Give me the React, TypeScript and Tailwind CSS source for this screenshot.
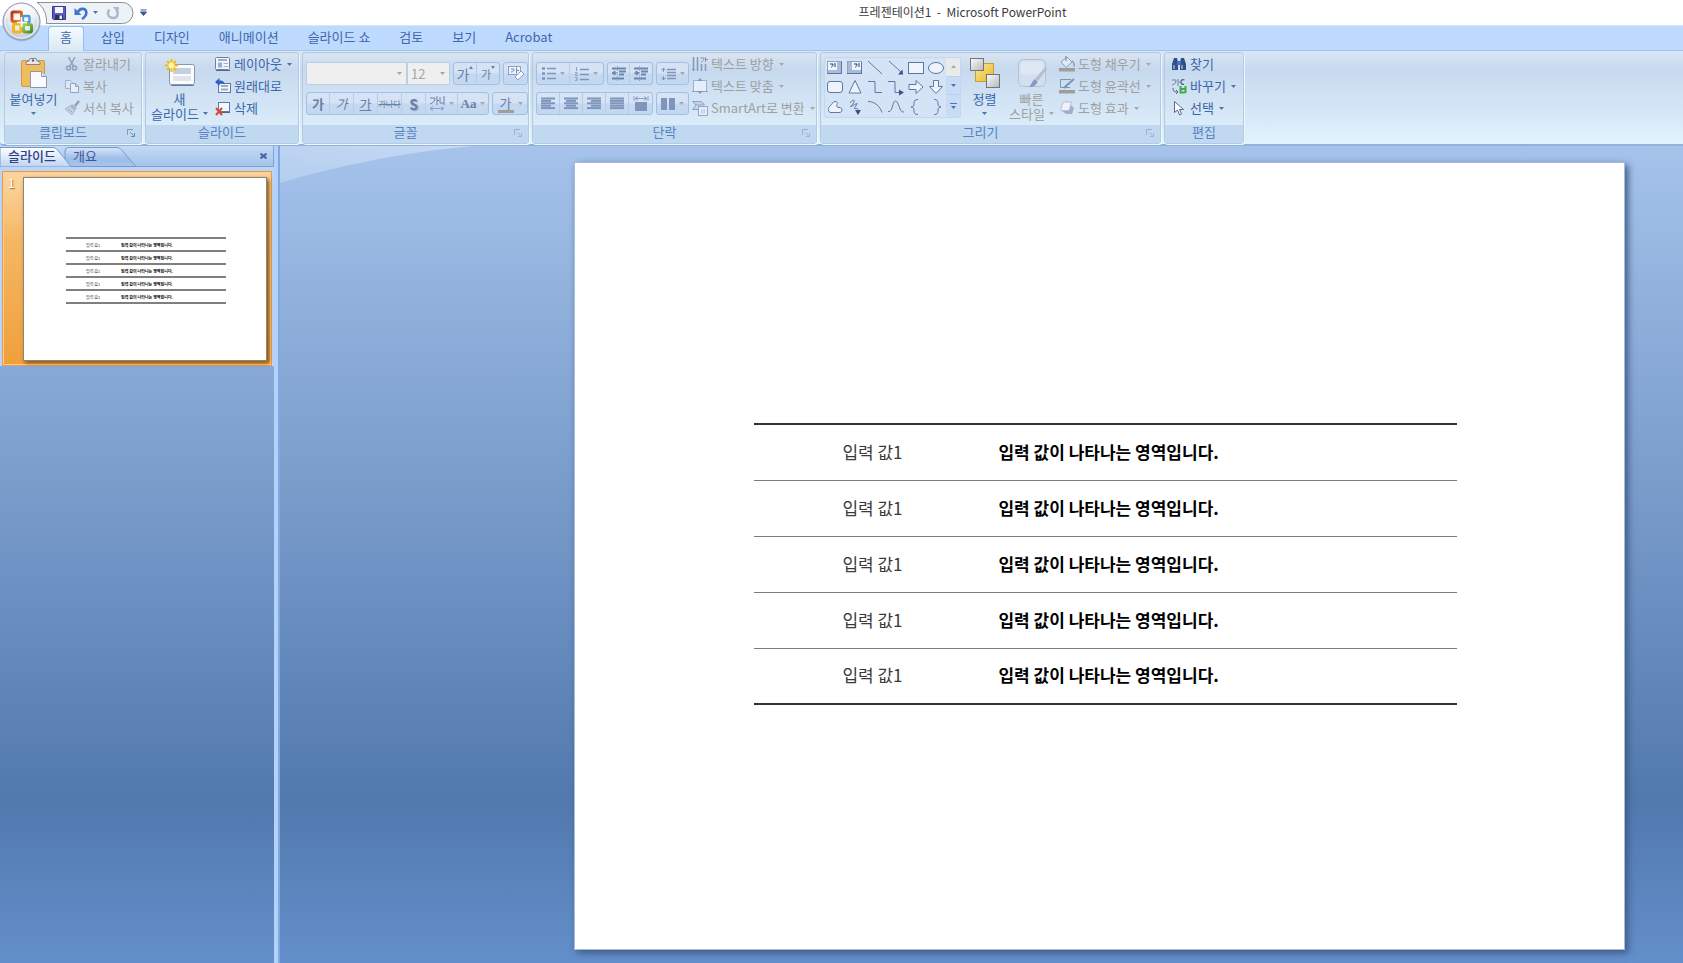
import React from "react";

type Kids = { children?: React.ReactNode };

const Svg = ({ w, h, children }: Kids & { w: number; h: number }) => (
  <svg width={w} height={h} viewBox={`0 0 ${w} ${h}`} fill="none" className="shrink-0" aria-hidden="true">
    {children}
  </svg>
);

const Caret = ({ off = false }: { off?: boolean }) => (
  <Svg w={5} h={3}>
    <path d="M0 0h5L2.500 3z" fill={off ? "#a9a7a5" : "#4a74b4"} />
  </Svg>
);

/* ---------- quick access ---------- */

const OfficeOrb = () => (
  <svg width="42" height="42" viewBox="0 0 42 42" fill="none" aria-hidden="true">
    <defs>
      <radialGradient id="orb" cx="50%" cy="40%" r="60%">
        <stop offset="0" stopColor="#ffffff" />
        <stop offset="0.6" stopColor="#e3e9f1" />
        <stop offset="1" stopColor="#b4bfce" />
      </radialGradient>
      <linearGradient id="shine" x1="0" y1="0" x2="0" y2="1">
        <stop offset="0" stopColor="#fff" stopOpacity="0.9" />
        <stop offset="1" stopColor="#fff" stopOpacity="0.2" />
      </linearGradient>
      <linearGradient id="logoRed" x1="0" y1="0" x2="1" y2="1">
        <stop offset="0" stopColor="#c1301a" />
        <stop offset="1" stopColor="#f08a28" />
      </linearGradient>
      <linearGradient id="logoGreen" x1="0" y1="0" x2="1" y2="1">
        <stop offset="0" stopColor="#a6cf5a" />
        <stop offset="1" stopColor="#3f8f2c" />
      </linearGradient>
    </defs>
    <circle cx="21.500" cy="22.500" r="19" fill="#7388a8" opacity="0.35" />
    <circle cx="21.500" cy="21.500" r="18.500" fill="url(#orb)" stroke="#8b9bb3" />
    <circle cx="21.500" cy="21.500" r="16.500" stroke="#fff" strokeOpacity="0.8" />
    <path d="M5 19C6 9 13 4 21 4s15 5 16 15c-9-3-23-3-32 0z" fill="url(#shine)" />
    <rect x="12" y="12" width="9.500" height="9.500" rx="1.500" stroke="url(#logoRed)" strokeWidth="3" />
    <rect x="23" y="16" width="6.500" height="6.500" rx="1" stroke="#4a9bd6" strokeWidth="2.400" />
    <rect x="13.500" y="24" width="7.500" height="8" rx="1.500" stroke="#f2b51d" strokeWidth="3" />
    <rect x="23.500" y="24.500" width="8" height="7.500" rx="1.500" stroke="url(#logoGreen)" strokeWidth="3" />
    <path d="M21.500 17v10M17 22.500h10" stroke="#fff" strokeWidth="1.600" />
  </svg>
);

const SaveIcon = () => (
  <Svg w={16} h={16}>
    <path d="M1.500 1.500h13v13h-12l-1-1z" fill="#5b5bc0" stroke="#36368f" />
    <rect x="4" y="2" width="8" height="6" fill="#f4f6fc" />
    <rect x="4" y="10" width="8" height="4.500" fill="#2c2c60" />
    <rect x="8.500" y="10.500" width="2.500" height="3.500" fill="#e9edf7" />
  </Svg>
);

const UndoIcon = () => (
  <Svg w={14} h={14}>
    <path d="M0.500 2v7h7z" fill="#4173c8" />
    <path d="M4 6c2-4 7-4 8-1s-1 6-4 8" stroke="#4173c8" strokeWidth="2.600" />
  </Svg>
);

const RedoIcon = () => (
  <Svg w={14} h={14}>
    <path d="M3.500 3.500C1 6 1.500 11.500 6.500 12S13 7.500 10.500 4" stroke="#a9b9cf" strokeWidth="2.400" />
    <path d="M7 1h6l-1 6z" fill="#a9b9cf" />
  </Svg>
);

/* ---------- large ribbon icons ---------- */

const PasteIcon = () => (
  <Svg w={28} h={32}>
    <rect x="1.500" y="3.500" width="23" height="26" rx="1.500" fill="#f0bd5c" stroke="#cf9c45" />
    <path d="M6 7.500V5l3-1 1-2.500h6L17 4l3 1v2.500z" fill="#e8e8e8" stroke="#84888e" />
    <circle cx="13" cy="3.500" r="1.200" fill="#666" />
    <path d="M10.500 14.500h11l5 5v11h-16z" fill="#f9fbfe" stroke="#8a98ad" />
    <path d="M21.500 14.500v5h5" fill="#dbe3ee" stroke="#8a98ad" />
  </Svg>
);

const NewSlideIcon = () => (
  <Svg w={32} h={30}>
    <rect x="5.500" y="6.500" width="25" height="20" rx="2" fill="#fbfcfe" stroke="#8497b4" />
    <path d="M7 27.500h23" stroke="#6b7b94" />
    <rect x="9" y="10" width="18" height="6" fill="#c6cfde" />
    <rect x="9" y="18" width="18" height="5" fill="#dfe4ed" />
    <path d="M7.500 1v13M1 7.500h13M3 3l9 9M12 3l-9 9" stroke="#f2bb12" strokeWidth="2" />
    <circle cx="7.500" cy="7.500" r="3" fill="#fff6a8" />
  </Svg>
);

const ArrangeIcon = () => (
  <Svg w={32} h={32}>
    <defs>
      <linearGradient id="boxg" x1="0" y1="0" x2="1" y2="1">
        <stop offset="0" stopColor="#fafafa" />
        <stop offset="1" stopColor="#b4b8be" />
      </linearGradient>
      <linearGradient id="boxy" x1="0" y1="0" x2="1" y2="1">
        <stop offset="0" stopColor="#ffe99a" />
        <stop offset="1" stopColor="#e6b626" />
      </linearGradient>
    </defs>
    <rect x="6.500" y="6.500" width="18" height="18" fill="url(#boxy)" stroke="#c9a02c" />
    <rect x="1.500" y="1.500" width="13" height="12" fill="url(#boxg)" stroke="#6f757d" />
    <rect x="17.500" y="17.500" width="13" height="13" fill="url(#boxg)" stroke="#6f757d" />
  </Svg>
);

const QuickStyleIcon = () => (
  <Svg w={32} h={32}>
    <rect x="2.500" y="2.500" width="27" height="27" rx="5" fill="#d3dfef" stroke="#b2c1d8" />
    <rect x="4.500" y="4.500" width="23" height="13" rx="4" fill="#dee7f4" />
    <path d="M31 12l-9 12-3-2 10-12z" fill="#b2c0d6" />
    <path d="M21.500 24.500c-1 4-5 6-9 5.500 3-1 3-6 6.500-8z" fill="#8299c4" />
  </Svg>
);

/* ---------- small ribbon icons ---------- */

const CutIcon = () => (
  <Svg w={16} h={16}>
    <path d="M4.500 1l5 9M11 1L6 10" stroke="#8d9fbd" strokeWidth="1.500" />
    <circle cx="4.500" cy="12" r="2" stroke="#8d9fbd" strokeWidth="1.500" />
    <circle cx="10.500" cy="12" r="2" stroke="#8d9fbd" strokeWidth="1.500" />
  </Svg>
);
const CopyIcon = () => (
  <Svg w={16} h={16}>
    <path d="M1.500 2.500h5l2 2v6h-7z" fill="#dde6f2" stroke="#a3b2ca" />
    <path d="M6.500 5.500h5l3 3v6h-8z" fill="#e8eef7" stroke="#93a4bf" />
    <path d="M11.500 5.500v3h3" stroke="#93a4bf" />
  </Svg>
);
const BrushIcon = () => (
  <Svg w={16} h={16}>
    <path d="M15 1l-4 5" stroke="#8d9fbd" strokeWidth="2.400" />
    <path d="M8 4l5 4-2 2-5-4z" fill="#a9b7cd" />
    <path d="M6 6l5 4-3 5-7-6z" fill="#c6d1e1" stroke="#9aabc6" strokeWidth="0.800" />
    <path d="M4 9l4 3" stroke="#9aabc6" />
  </Svg>
);
const LayoutIcon = () => (
  <Svg w={16} h={16}>
    <rect x="0.500" y="1.500" width="14" height="12" rx="1" fill="#f1f5fb" stroke="#6680aa" />
    <path d="M3 4h9" stroke="#8096ba" strokeWidth="1.500" />
    <rect x="3" y="6.500" width="4" height="5" fill="#9badc9" />
    <path d="M8.500 7.500H13M8.500 10.500H13" stroke="#9badc9" />
    <path d="M1 14.500h14" stroke="#52698f" />
  </Svg>
);
const ResetIcon = () => (
  <Svg w={16} h={16}>
    <rect x="3.500" y="5.500" width="12" height="9" fill="#f1f5fb" stroke="#5e7aa8" />
    <path d="M6 8h7" stroke="#8096ba" strokeWidth="1.500" />
    <path d="M6 11.500h7" stroke="#9badc9" strokeWidth="2" />
    <path d="M0 4l4.500-4v2.500c4 0 5 2 5 4C8 5 6.500 5 4.500 5.500V8z" fill="#2d62c4" />
  </Svg>
);
const DeleteIcon = () => (
  <Svg w={16} h={16}>
    <rect x="3.500" y="2.500" width="11" height="9" fill="#f4f7fc" stroke="#5e7aa8" />
    <path d="M4 12.500h11" stroke="#4b6693" />
    <path d="M1 8l6 7M7 8l-6 7" stroke="#e0452f" strokeWidth="2" />
  </Svg>
);
const TextDirIcon = () => (
  <Svg w={16} h={16}>
    <path d="M1.500 1v14M5.500 1v14M9.500 8v7M13.500 8v7" stroke="#8497b6" strokeWidth="1.500" />
    <path d="M8 2h4c0 2-1 3-3 4M13.500 1v5M13.500 3.500H16" stroke="#8497b6" />
    <path d="M0 13h3l-1.500 2z" fill="#8497b6" />
  </Svg>
);
const TextAlignIcon = () => (
  <Svg w={16} h={16}>
    <rect x="1.500" y="2.500" width="13" height="11" fill="#e6eefa" stroke="#9eb1cf" />
    <path d="M0 13.500h16" stroke="#8ea2c1" />
    <path d="M8 0l2.500 3h-5zM8 16l2.500-3h-5z" fill="#8396b6" />
  </Svg>
);
const SmartArtIcon = () => (
  <Svg w={16} h={16}>
    <path d="M0.500 1.500h9l3 3.500H4zM4 5L0.500 9.500H6" fill="#c3d2e8" stroke="#8ea2c1" />
    <rect x="6.500" y="6.500" width="9" height="9" fill="#e7eef8" stroke="#94a6c3" />
    <path d="M9 9h4v4.500H9z" fill="#bfcde2" />
    <path d="M11 9v4" stroke="#e7eef8" />
  </Svg>
);
const FillIcon = () => (
  <Svg w={16} h={16}>
    <path d="M2 6l6-5 5 5-6 5.500z" fill="#e2eaf5" stroke="#8c9dba" />
    <path d="M7 0v5M13 5c2 1 2.500 3 2 5.500" stroke="#8193b3" strokeWidth="1.300" />
    <rect x="0" y="12" width="16" height="3.500" fill="#a19d99" />
  </Svg>
);
const OutlineIcon = () => (
  <Svg w={16} h={16}>
    <path d="M12 1.500H1.500v8H11" stroke="#8193b3" />
    <path d="M15 1L7 8l-2 2" stroke="#8193b3" strokeWidth="2" />
    <rect x="0" y="12" width="16" height="3.500" fill="#a19d99" />
  </Svg>
);
const EffectIcon = () => (
  <Svg w={16} h={16}>
    <path d="M3 11l4 3h6l2-6-3-3z" fill="#9fb0cb" />
    <path d="M4 2h8.500L10 10.500H1.500z" fill="#eff3f9" stroke="#b5c2d7" strokeLinejoin="round" />
  </Svg>
);
const FindIcon = () => (
  <Svg w={16} h={16}>
    <path d="M3 2h3l1 4v8H1V8z" fill="#2f4f8f" />
    <path d="M10 2h3l2 6v6H9V6z" fill="#2f4f8f" />
    <rect x="6" y="5" width="4" height="4" fill="#516fab" />
    <path d="M3 9v4M11 9v4" stroke="#b7c8e6" strokeWidth="1.200" />
  </Svg>
);
const ReplaceIcon = () => (
  <Svg w={16} h={16}>
    <path d="M1 2h4c0 3-1 4-4 5M7 1v7M7 4h2" stroke="#7486a3" />
    <path d="M13.500 2c-2-1-3.500 0-3.500 2s1.500 3 3 2" stroke="#50617f" strokeWidth="1.300" />
    <path d="M2 10c0 3 1 4 4 4M5 12l2 2-2 2" stroke="#5a6b88" />
    <path d="M9.500 8v6.500h4.500M14.500 8v7M9 11h5" stroke="#3cab4a" strokeWidth="2" />
  </Svg>
);
const SelectIcon = () => (
  <Svg w={16} h={16}>
    <path d="M3.500 1.500v11l3-2.500 2 5 2-1-2-4.500h4z" fill="#fff" stroke="#57688a" strokeLinejoin="round" />
  </Svg>
);

/* ---------- ribbon parts ---------- */

const Launcher = ({ off = false }: { off?: boolean }) => (
  <button type="button" aria-label="대화 상자 표시" className="flex h-4 w-5 shrink-0 items-center justify-center">
    <Svg w={9} h={9}>
      <path d="M0.500 6V0.500H6" stroke={off ? "#9db2cd" : "#7b9bc6"} />
      <path d="M3.500 3.500l3 3M7.500 4v3.500H4" stroke={off ? "#9db2cd" : "#6584b0"} />
    </Svg>
  </button>
);

const Group = ({
  title,
  width,
  launcher,
  children,
}: Kids & { title: string; width: string; launcher?: "on" | "off" }) => (
  <section
    aria-label={title}
    className={`flex shrink-0 flex-col overflow-hidden rounded-[3px] border border-[#b3cbe0] shadow-[1px_1px_0_#eef7ff] ${width}`}
  >
    <div className="flex h-[72px]">{children}</div>
    <div className="flex h-[18px] bg-[#c1d9f0] text-[#5682c2]">
      <h2 className="flex-1 text-center leading-[14px]">{title}</h2>
      {launcher && <Launcher off={launcher === "off"} />}
    </div>
  </section>
);

const Item = ({
  icon,
  label,
  off = false,
  menu = false,
}: {
  icon: React.ReactNode;
  label: string;
  off?: boolean;
  menu?: boolean;
}) => (
  <button
    type="button"
    disabled={off}
    className={`flex h-[22px] items-center gap-[3px] whitespace-nowrap ${off ? "text-[#a09f9f]" : "text-[#3a66ab]"}`}
  >
    {icon}
    <span>{label}</span>
    {menu && (
      <span className="pl-[2px]">
        <Caret off={off} />
      </span>
    )}
  </button>
);

const Big = ({
  icon,
  lines,
  width,
  off = false,
}: {
  icon: React.ReactNode;
  lines: string[];
  width: string;
  off?: boolean;
}) => (
  <button
    type="button"
    disabled={off}
    className={`flex shrink-0 flex-col items-center pt-[2px] leading-[15px] whitespace-nowrap ${width} ${
      off ? "text-[#a09f9f]" : "text-[#3a66ab]"
    }`}
  >
    <span className="flex h-[36px] items-center">{icon}</span>
    <span>{lines[0]}</span>
    <span className="flex h-[15px] items-center gap-1">
      {lines[1]}
      <Caret off={off} />
    </span>
  </button>
);

const Bar = ({ children }: Kids) => (
  <div className="flex h-[23px] shrink-0 divide-x divide-[#b6cdea] overflow-hidden rounded-[3px] border border-[#a2bfe4] bg-linear-to-b from-[#d5e3f5] from-45% to-[#c4d8f1] to-55%">
    {children}
  </div>
);

const Cell = ({ label, w, menu = false, children }: Kids & { label: string; w: string; menu?: boolean }) => (
  <button
    type="button"
    disabled
    aria-label={label}
    className={`flex h-full items-center justify-center gap-1 leading-[20px] whitespace-nowrap text-[#6980a8] ${w}`}
  >
    {children}
    {menu && <Caret off />}
  </button>
);

const AlignLines = ({ rows }: { rows: [number, number][] }) => (
  <Svg w={15} h={13}>
    {rows.map(([x, w], i) => (
      <rect key={i} x={x} y={i * 2.4 + 0.5} width={w} height={2} fill="#7f95bb" />
    ))}
  </Svg>
);

const IndentIcon = ({ flip = false }: { flip?: boolean }) => (
  <Svg w={16} h={15}>
    <path d="M6.500 0v15" stroke="#8fa3c5" strokeDasharray="1 1" />
    <path d="M1 2.500h14M8 5.500h7M8 8.500h5M1 12.500h12" stroke="#6d84ad" strokeWidth="2" />
    <path d={flip ? "M1 7h3M3 5l3 2-3 2z" : "M2 7h4M4 5L1 7l3 2z"} stroke="#6d84ad" fill="#6d84ad" />
  </Svg>
);

const ClearIcon = () => (
  <Svg w={18} h={17}>
    <rect x="1.500" y="1.500" width="12" height="8" fill="#edf3fb" stroke="#8a9fc2" />
    <path d="M4 4h3c0 2-1 3-3 3M9.500 2.500v6M9.500 5.500H12" stroke="#7389b0" />
    <path d="M8 12l6-6 3 3-6 6z" fill="#f4f7fc" stroke="#8a9fc2" />
    <path d="M8 12l3 3" stroke="#8a9fc2" />
  </Svg>
);

const TextBoxArt = ({ x }: { x: number }) => (
  <>
    <rect x="1.500" y="2.500" width="14" height="12" fill="#a9bbd8" stroke="#8fa2c0" />
    <rect x={x + 2} y="3" width="9" height="8" fill="#f1f5fb" stroke="none" />
    <path d={x ? "M8 5h3c0 2-1 3-2 3M13 4v4" : "M4 5h3c0 2-1 3-2 3M9 4v4"} stroke="#243c6d" />
    <path d="M1 14.500h14.500V3" stroke="#5b73a0" />
  </>
);

const SHAPES: { name: string; art: React.ReactNode }[] = [
  { name: "텍스트 상자", art: <TextBoxArt x={0} /> },
  { name: "세로 텍스트 상자", art: <TextBoxArt x={4} /> },
  { name: "선", art: <path d="M2 2l14 13" /> },
  {
    name: "화살표",
    art: (
      <>
        <path d="M2 2l12 11" />
        <path d="M16 15.500h-5l4.500-5z" fill="#3a557f" stroke="none" />
      </>
    ),
  },
  { name: "직사각형", art: <rect x="1.500" y="3.500" width="15" height="11" fill="#edf4fd" /> },
  { name: "타원", art: <ellipse cx="9" cy="9" rx="7.500" ry="5.500" fill="#edf4fd" /> },
  { name: "둥근 직사각형", art: <rect x="1.500" y="3.500" width="15" height="11" rx="2.500" fill="#edf4fd" /> },
  { name: "삼각형", art: <path d="M9 2.500l6 12.500H3z" fill="#edf4fd" /> },
  { name: "꺾인 연결선", art: <path d="M2 3.500h7v11h7" /> },
  {
    name: "꺾인 화살표 연결선",
    art: (
      <>
        <path d="M1 3.500h7v11h5" />
        <path d="M12 11.500l5 3-5 3z" fill="#3a557f" stroke="none" />
      </>
    ),
  },
  { name: "오른쪽 화살표", art: <path d="M2 6.500h7V2.500l7 6.500-7 6.500v-4H2z" fill="#edf4fd" /> },
  { name: "아래쪽 화살표", art: <path d="M6.500 2.500v6h-4l6.500 7 6.500-7h-4v-6z" fill="#edf4fd" /> },
  {
    name: "자유형: 도형",
    art: <path d="M4 14.500c-2-1-2-5 0-6.500s3-4.500 5-4.500 3 1 2 3 0 3 2 3 3 1 3 2.500-1 2.500-3 2.500z" fill="#edf4fd" />,
  },
  {
    name: "자유곡선",
    art: (
      <>
        <path d="M4 5c2-3 5-4 4-1S3 9 5 8.500 12 4 11 6s-4 5-2 4.500 3 0 3 2" />
        <path d="M9 12h6l-3 5z" fill="#3a557f" stroke="none" />
      </>
    ),
  },
  { name: "원호", art: <path d="M2 3.500c7 0 12 5 14 11" /> },
  { name: "곡선", art: <path d="M1 13.500C6 15 5 3 8.500 3S12 15 17 14" /> },
  { name: "왼쪽 중괄호", art: <path d="M11 1.500c-3 0-4 1-4 4s-1 3-3 3.500c2 .5 3 .5 3 3.500s1 4 4 4" /> },
  { name: "오른쪽 중괄호", art: <path d="M7 1.500c3 0 4 1 4 4s1 3 3 3.500c-2 .5-3 .5-3 3.500s-1 4-4 4" /> },
];

const Combo = ({ label, value, w }: { label: string; value: string; w: string }) => (
  <label className={`grid h-[23px] items-center border border-[#bdcfe4] bg-[#efefef] ${w}`}>
    <span className="sr-only">{label}</span>
    <select
      disabled
      defaultValue={value}
      className="col-start-1 row-start-1 h-[21px] w-full appearance-none bg-transparent pl-[3px] leading-[21px] text-[#a5a5a5] opacity-100"
    >
      <option value={value}>{value}</option>
    </select>
    <span className="col-start-1 row-start-1 justify-self-end pr-1">
      <Caret off />
    </span>
  </label>
);

const ROWS = [1, 2, 3, 4, 5];

const MENU = ["삽입", "디자인", "애니메이션", "슬라이드 쇼", "검토", "보기", "Acrobat"];

export default function App() {
  return (
    <div className="flex min-h-screen flex-col overflow-hidden bg-[#bedaff] font-['Noto_Sans_CJK_KR',sans-serif] text-[13px]">
      <header className="relative">
        <div className="flex h-[25px] bg-white">
          <div className="relative flex w-[150px] shrink-0 items-center pl-[51px]">
            <svg
              width="98"
              height="23"
              viewBox="0 0 98 23"
              fill="none"
              className="absolute top-px left-9"
              aria-hidden="true"
            >
              <path
                d="M1 1.500h85.500a10.500 10.500 0 0 1 0 21H10.500C11 14 8 6 1 1.500z"
                fill="#edf2f7"
                stroke="#8b8f94"
              />
            </svg>
            <div className="relative flex items-center">
              <button type="button" aria-label="저장">
                <SaveIcon />
              </button>
              <button type="button" aria-label="실행 취소" className="ml-[7px] flex items-center gap-[5px]">
                <UndoIcon />
                <Caret />
              </button>
              <button type="button" aria-label="다시 실행" className="ml-2">
                <RedoIcon />
              </button>
              <button type="button" aria-label="빠른 실행 도구 모음 사용자 지정" className="ml-[20px]">
                <Svg w={7} h={7}>
                  <path d="M0.500 1h6M0.500 3h6L3.500 6.500z" stroke="#3c5a8c" fill="#3c5a8c" />
                </Svg>
              </button>
            </div>
          </div>
          <h1 className="flex-1 pl-[92px] text-center text-[12px] leading-[24px] text-[#3c3c3c]">
            프레젠테이션1&nbsp; -&nbsp; Microsoft PowerPoint
          </h1>
        </div>
        <nav className="flex h-[26px] items-start gap-px border-t border-b border-t-[#d6e7fb] border-b-[#a5c4ee] bg-[#bedaff] pl-[48px] leading-[22px] text-[#3f68ab]">
          <a
            href="#home"
            aria-current="page"
            className="mr-[2px] h-[25px] w-[36px] rounded-t-[4px] border border-b-0 border-[#8fc0ee] bg-linear-to-b from-[#f5fafe] to-[#dce8f5] text-center leading-[20px]"
          >
            홈
          </a>
          {MENU.map((m) => (
            <a key={m} href="#ribbon" className="px-[14px] whitespace-nowrap">
              {m}
            </a>
          ))}
        </nav>
        <button type="button" aria-label="Office 단추" className="absolute top-0 left-0">
          <OfficeOrb />
        </button>
      </header>

      <div className="flex h-[95px] gap-[3px] rounded-l-[4px] border-b-2 border-b-[#93b3d6] bg-linear-to-b from-[#dbe6f3] via-[#c7d9ee] via-20% to-[#e1f3fd] pt-px pl-1 leading-[20px]">
        <Group title="클립보드" width="w-[138px]" launcher="on">
          <Big width="w-[57px]" icon={<PasteIcon />} lines={["붙여넣기", ""]} />
          <div className="flex flex-col items-start pl-[2px]">
            <Item off icon={<CutIcon />} label="잘라내기" />
            <Item off icon={<CopyIcon />} label="복사" />
            <Item off icon={<BrushIcon />} label="서식 복사" />
          </div>
        </Group>
        <Group title="슬라이드" width="w-[154px]">
          <Big width="w-[67px]" icon={<NewSlideIcon />} lines={["새", "슬라이드"]} />
          <div className="flex flex-col items-start pl-[2px]">
            <Item menu icon={<LayoutIcon />} label="레이아웃" />
            <Item icon={<ResetIcon />} label="원래대로" />
            <Item icon={<DeleteIcon />} label="삭제" />
          </div>
        </Group>
        <Group title="글꼴" width="w-[227px]" launcher="off">
          <div className="flex flex-col gap-[7px] pt-[9px] pl-[3px]">
            <div className="flex gap-[3px]">
              <div className="flex">
                <Combo label="글꼴" value="" w="w-[101px]" />
                <Combo label="글꼴 크기" value="12" w="w-[43px]" />
              </div>
              <Bar>
                <Cell label="글꼴 크기 크게" w="w-[23px]">
                  <span className="text-[14px]">가</span>
                  <svg width="4" height="3" viewBox="0 0 4 3" className="mb-3 -ml-1" aria-hidden="true">
                    <path d="M0 3h4L2 0z" fill="#6980a8" />
                  </svg>
                </Cell>
                <Cell label="글꼴 크기 작게" w="w-[22px]">
                  <span className="text-[11px]">가</span>
                  <svg width="4" height="3" viewBox="0 0 4 3" className="mb-3 -ml-1" aria-hidden="true">
                    <path d="M0 0h4L2 3z" fill="#6980a8" />
                  </svg>
                </Cell>
              </Bar>
              <Bar>
                <Cell label="모든 서식 지우기" w="w-[23px]">
                  <ClearIcon />
                </Cell>
              </Bar>
            </div>
            <div className="flex gap-[3px]">
              <Bar>
                <Cell label="굵게" w="w-[23px]">
                  <b>가</b>
                </Cell>
                <Cell label="기울임꼴" w="w-[24px]">
                  <i>가</i>
                </Cell>
                <Cell label="밑줄" w="w-[24px]">
                  <u>가</u>
                </Cell>
                <Cell label="취소선" w="w-[24px]">
                  <s className="text-[8px]">가나다</s>
                </Cell>
                <Cell label="텍스트 그림자" w="w-[24px]">
                  <b className="text-[14px] [text-shadow:1px_1px_1px_#8fa0bd]">S</b>
                </Cell>
                <Cell label="문자 간격" w="w-[32px]" menu>
                  <Svg w={16} h={15}>
                    <path d="M1 2h5c0 3-2 5-5 6M8 0v9M8 4.500h2M11 1v6h4M15 0v9" stroke="#6980a8" />
                    <path d="M2 12.500h12M4 10.500l-3 2 3 2M12 10.500l3 2-3 2" stroke="#8fa2c2" />
                  </Svg>
                </Cell>
                <Cell label="대/소문자 바꾸기" w="w-[30px]" menu>
                  <span className="font-['Liberation_Serif',serif] font-bold">Aa</span>
                </Cell>
              </Bar>
              <Bar>
                <Cell label="글꼴 색" w="w-[34px]" menu>
                  <span className="h-[18px] w-4 border-b-[3px] border-[#a19d99] leading-[15px]">가</span>
                </Cell>
              </Bar>
            </div>
          </div>
        </Group>
        <Group title="단락" width="w-[285px]" launcher="off">
          <div className="flex shrink-0 flex-col gap-[7px] pt-[9px] pl-[3px]">
            <div className="flex gap-[3px]">
              <Bar>
                <Cell label="글머리 기호" w="w-[33px]" menu>
                  <Svg w={14} h={13}>
                    <path d="M5 1.500h9M5 6.500h9M5 11.500h9" stroke="#7f95bb" strokeWidth="1.500" />
                    <path d="M0 1.500h3M0 6.500h3M0 11.500h3" stroke="#7f95bb" strokeWidth="2.500" />
                  </Svg>
                </Cell>
                <Cell label="번호 매기기" w="w-[33px]" menu>
                  <Svg w={14} h={14}>
                    <path d="M5 2.500h9M5 7.500h9M5 12.500h9" stroke="#7f95bb" strokeWidth="1.500" />
                    <path d="M1.500 0v4M0 5.500h2v1.500H0.500v1.500H3M0 10.500h2v3H0M1 12h1" stroke="#8ea2c4" />
                  </Svg>
                </Cell>
              </Bar>
              <Bar>
                <Cell label="목록 수준 줄임" w="w-[22px]">
                  <IndentIcon />
                </Cell>
                <Cell label="목록 수준 늘림" w="w-[22px]">
                  <IndentIcon flip />
                </Cell>
              </Bar>
              <Bar>
                <Cell label="줄 간격" w="w-[31px]" menu>
                  <Svg w={15} h={14}>
                    <path d="M6 2.500h9M6 5.500h9M6 8.500h9M6 11.500h9" stroke="#7f95bb" strokeWidth="1.300" />
                    <path d="M2.500 1v4M2.500 9v4M0.500 3.500l2-2.500 2 2.500M0.500 10.500l2 2.500 2-2.500" stroke="#7f95bb" />
                  </Svg>
                </Cell>
              </Bar>
            </div>
            <div className="flex gap-[3px]">
              <Bar>
                <Cell label="왼쪽 맞춤" w="w-[23px]">
                  <AlignLines rows={[[0, 14], [0, 10], [0, 14], [0, 10], [0, 14]]} />
                </Cell>
                <Cell label="가운데 맞춤" w="w-[23px]">
                  <AlignLines rows={[[0, 14], [2, 10], [0, 14], [2, 10], [0, 14]]} />
                </Cell>
                <Cell label="오른쪽 맞춤" w="w-[23px]">
                  <AlignLines rows={[[0, 14], [4, 10], [0, 14], [4, 10], [0, 14]]} />
                </Cell>
                <Cell label="양쪽 맞춤" w="w-[23px]">
                  <AlignLines rows={[[0, 14], [0, 14], [0, 14], [0, 14], [0, 14]]} />
                </Cell>
                <Cell label="균등 분할" w="w-[23px]">
                  <Svg w={16} h={16}>
                    <path d="M1 0v5M15 0v5M2 2.500h12M5 0.500l-3 2 3 2M11 0.500l3 2-3 2" stroke="#8ea2c4" />
                    <rect x="2" y="6" width="12" height="9" fill="#7f95bb" />
                  </Svg>
                </Cell>
              </Bar>
              <Bar>
                <Cell label="단" w="w-[31px]" menu>
                  <Svg w={14} h={12}>
                    <path d="M0 0h6v12H0zM8 0h6v12H8z" fill="#7f95bb" />
                  </Svg>
                </Cell>
              </Bar>
            </div>
          </div>
          <div className="flex flex-col items-start pl-[3px]">
            <Item off menu icon={<TextDirIcon />} label="텍스트 방향" />
            <Item off menu icon={<TextAlignIcon />} label="텍스트 맞춤" />
            <Item off menu icon={<SmartArtIcon />} label="SmartArt로 변환" />
          </div>
        </Group>
        <Group title="그리기" width="w-[341px]" launcher="off">
          <div className="mt-1 ml-[3px] flex h-[61px] shrink-0 overflow-hidden rounded-[2px] border border-[#c3d7ee] bg-[#d4e4f6]">
            <div className="grid w-[121px] grid-cols-6">
              {SHAPES.map((s) => (
                <button key={s.name} type="button" aria-label={s.name} className="flex items-center justify-center">
                  <svg width="18" height="18" viewBox="0 0 18 18" fill="none" stroke="#5f78a0" aria-hidden="true">
                    {s.art}
                  </svg>
                </button>
              ))}
            </div>
            <div className="grid w-[14px] divide-y divide-[#bcd2ec] bg-[#c9dcf5]">
              <button type="button" aria-label="위로" disabled className="flex items-center justify-center bg-[#eaeaea]">
                <Svg w={5} h={3}>
                  <path d="M0 3h5L2.500 0z" fill="#a9a7a5" />
                </Svg>
              </button>
              <button type="button" aria-label="아래로" className="flex items-center justify-center">
                <Caret />
              </button>
              <button type="button" aria-label="자세히" className="flex items-center justify-center">
                <Svg w={7} h={7}>
                  <path d="M0 0.500h7" stroke="#4a74b4" />
                  <path d="M1 3h5L3.500 6z" fill="#4a74b4" />
                </Svg>
              </button>
            </div>
          </div>
          <Big width="w-[47px]" icon={<ArrangeIcon />} lines={["정렬", ""]} />
          <Big width="w-[47px]" off icon={<QuickStyleIcon />} lines={["빠른", "스타일"]} />
          <div className="flex flex-col items-start pl-1">
            <Item off menu icon={<FillIcon />} label="도형 채우기" />
            <Item off menu icon={<OutlineIcon />} label="도형 윤곽선" />
            <Item off menu icon={<EffectIcon />} label="도형 효과" />
          </div>
        </Group>
        <Group title="편집" width="w-[80px]">
          <div className="flex flex-col items-start pl-[6px]">
            <Item icon={<FindIcon />} label="찾기" />
            <Item menu icon={<ReplaceIcon />} label="바꾸기" />
            <Item menu icon={<SelectIcon />} label="선택" />
          </div>
        </Group>
      </div>

      <div className="flex flex-1 bg-linear-to-b from-[#a5c3eb] via-[#5279ae] via-80% to-[#638fca]">
        <aside className="w-[274px] shrink-0">
          <div className="relative flex h-[21px] border-r border-b border-[#7ba3d6] bg-linear-to-b from-[#c5daf5] to-[#a5c3ea] leading-[19px]">
            <svg width="140" height="21" viewBox="0 0 140 21" className="absolute top-0 left-0" aria-hidden="true">
              <defs>
                <linearGradient id="tabOn" x1="0" y1="0" x2="0" y2="1">
                  <stop offset="0" stopColor="#ffffff" />
                  <stop offset="1" stopColor="#bcd4f3" />
                </linearGradient>
                <linearGradient id="tabOff" x1="0" y1="0" x2="0" y2="1">
                  <stop offset="0" stopColor="#d8e6f8" />
                  <stop offset="0.600" stopColor="#9dbce6" />
                  <stop offset="1" stopColor="#a9c6ed" />
                </linearGradient>
              </defs>
              <path d="M65 20.500V5q0-3.500 3.500-3.500H117q3 0 5 3l14 16z" fill="url(#tabOff)" stroke="#6f9bd3" />
              <path d="M0 21V1.500h53q3 0 5 3L71.500 21z" fill="url(#tabOn)" stroke="#6f9bd3" />
            </svg>
            <button type="button" className="relative flex w-[64px] pl-2 font-medium text-[#2f4287]">
              슬라이드
            </button>
            <button type="button" className="relative flex flex-1 pl-[9px] text-[#3f5796]">
              개요
            </button>
            <button type="button" aria-label="닫기" className="flex w-5 items-center justify-center">
              <Svg w={7} h={6}>
                <path d="M0.500 0.500l6 5M6.500 0.500l-6 5" stroke="#41699f" strokeWidth="2" />
              </Svg>
            </button>
          </div>
          <div className="bg-[#bcd5f5] px-[2px] pt-1">
            <div className="flex h-[195px] border border-[#ec9a4d] bg-linear-to-b from-[#fbd7a0] via-[#f5b764] via-35% to-[#f0a038] shadow-[inset_0_0_0_1px_#fbcf95]">
              <span className="w-[20px] shrink-0 pt-[2px] pl-[5px] text-[12px] text-white [text-shadow:1px_1px_1px_#9a6b2c]">
                1
              </span>
              <div className="my-[5px] flex h-[184px] w-[244px] shrink-0 flex-col border border-[#8f8577] bg-white pt-[59px] pl-[42px] shadow-[2px_2px_4px_#7d5218]">
                <div className="w-[160px] border-t-2 border-[#7f7f7f]">
                  {ROWS.map((r) => (
                    <div
                      key={r}
                      className="flex h-[13px] items-center border-b-2 border-[#7f7f7f] text-[4px] leading-[8px] text-[#333]"
                    >
                      <span className="w-[55px] pl-5">입력 값1</span>
                      <b className="text-black">입력 값이 나타나는 영역입니다.</b>
                    </div>
                  ))}
                </div>
              </div>
            </div>
          </div>
        </aside>
        <div className="w-[6px] shrink-0 border-r-2 border-[#7fa9e2] bg-[#b3d2fb]" />
        <main className="relative flex flex-1 items-start pt-4 pr-[58px] pb-[10px] pl-[294px]">
          <svg width="200" height="38" viewBox="0 0 200 38" className="absolute top-0 left-0" aria-hidden="true">
            <defs>
              <linearGradient id="arc" x1="0" y1="1" x2="1" y2="0">
                <stop offset="0" stopColor="#b4ceef" />
                <stop offset="1" stopColor="#c6d9f4" />
              </linearGradient>
            </defs>
            <path d="M0 0h195C120 6 50 22 0 37z" fill="url(#arc)" />
          </svg>
          <div className="aspect-4/3 flex-1 border border-[#a9bdd6] bg-white shadow-[3px_3px_7px_0_#3d5a86]">
            <div className="pt-[24.800%]">
              <table className="ml-[17.100%] w-[67%] border-collapse border-y-2 border-[#333] text-[17px] leading-[22px]">
                <tbody>
                  {ROWS.map((r) => (
                    <tr key={r} className="h-[56px] border-b border-[#7d7d7d] last:border-b-2 last:border-[#333]">
                      <td className="w-[244px] pb-px pl-[88px] text-[#3a3a3a]">입력 값1</td>
                      <td className="pb-px font-bold text-black">입력 값이 나타나는 영역입니다.</td>
                    </tr>
                  ))}
                </tbody>
              </table>
            </div>
          </div>
        </main>
      </div>
    </div>
  );
}
